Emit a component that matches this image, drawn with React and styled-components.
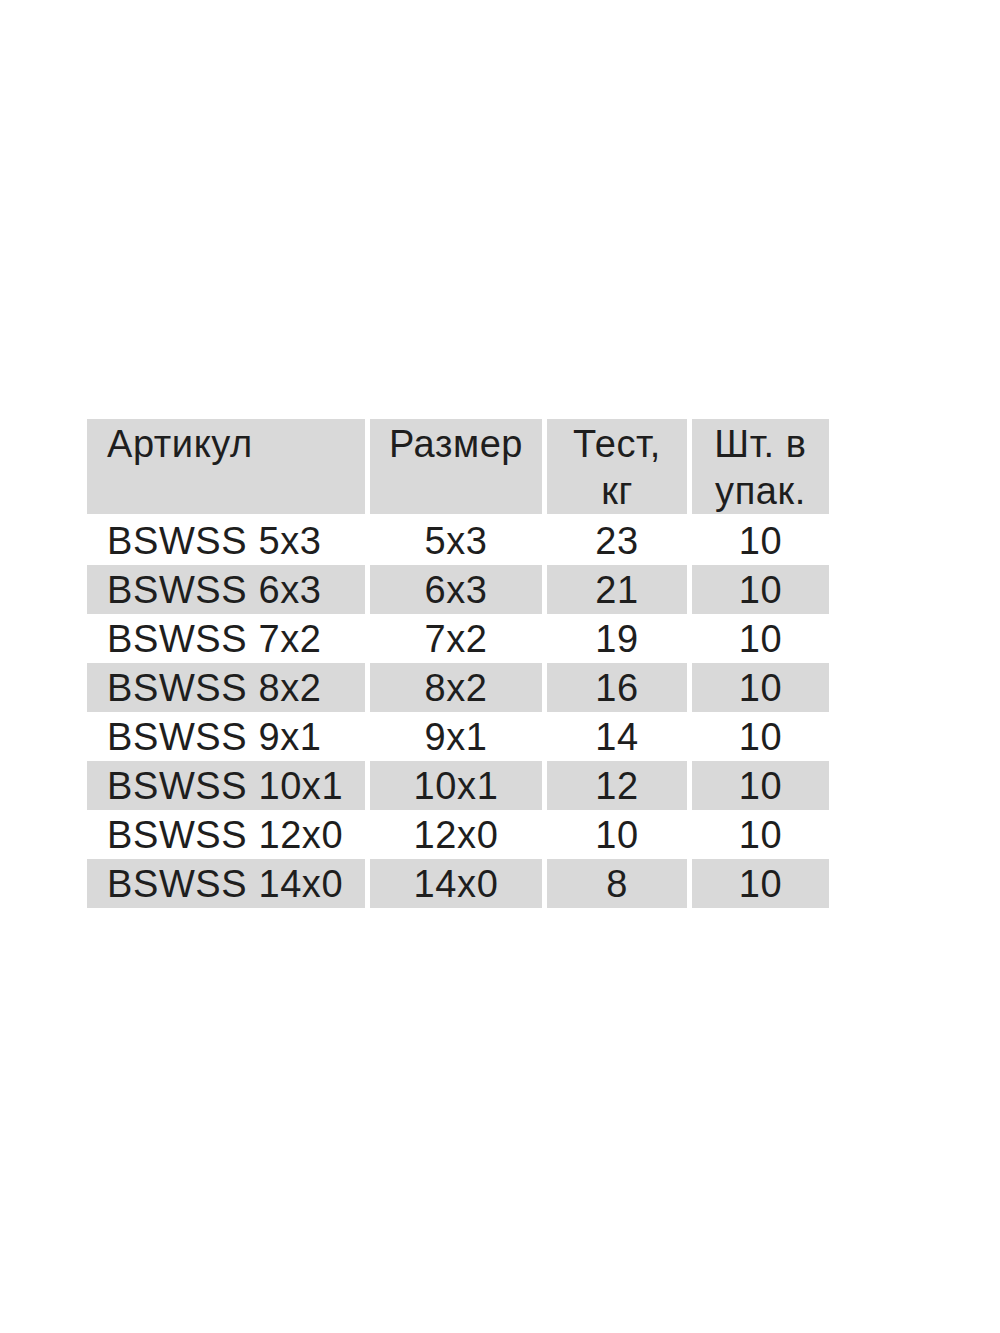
import React from 'react'
import styled, { createGlobalStyle } from 'styled-components'

const GlobalStyle = createGlobalStyle`
  body {
    margin: 0;
    background: #ffffff;
    font-family: "Liberation Sans", Arial, sans-serif;
  }
`

const Page = styled.div`
  width: 1000px;
  height: 1333px;
  box-sizing: border-box;
  padding: 419px 0 0 87px;
  background: #ffffff;
`

const Table = styled.div`
  display: grid;
  grid-template-columns: 278px 172px 140px 137px;
  column-gap: 5px;
  row-gap: 0;
  width: max-content;
  color: #1e1e1e;
  font-size: 38px;
  letter-spacing: 0.6px;
`

const HeadCell = styled.div`
  height: 95px;
  margin-bottom: 2px;
  box-sizing: border-box;
  padding-top: 2px;
  background: #d9d9d9;
  line-height: 47px;
  text-align: ${(p) => (p.$left ? 'left' : 'center')};
  padding-left: ${(p) => (p.$left ? '20px' : '0')};
`

const Cell = styled.div`
  height: 49px;
  line-height: 51px;
  overflow: hidden;
  background: ${(p) => (p.$shaded ? '#d9d9d9' : '#ffffff')};
  text-align: ${(p) => (p.$left ? 'left' : 'center')};
  padding-left: ${(p) => (p.$left ? '20px' : '0')};
  white-space: nowrap;
`

const rows = [
  ['BSWSS 5x3', '5x3', '23', '10'],
  ['BSWSS 6x3', '6x3', '21', '10'],
  ['BSWSS 7x2', '7x2', '19', '10'],
  ['BSWSS 8x2', '8x2', '16', '10'],
  ['BSWSS 9x1', '9x1', '14', '10'],
  ['BSWSS 10x1', '10x1', '12', '10'],
  ['BSWSS 12x0', '12x0', '10', '10'],
  ['BSWSS 14x0', '14x0', '8', '10'],
]

export default function App() {
  return (
    <Page>
      <GlobalStyle />
      <Table>
        <HeadCell $left>Артикул</HeadCell>
        <HeadCell>Размер</HeadCell>
        <HeadCell>
          Тест,
          <br />
          кг
        </HeadCell>
        <HeadCell>
          Шт. в
          <br />
          упак.
        </HeadCell>
        {rows.map((row, i) =>
          row.map((value, j) => (
            <Cell key={`${i}-${j}`} $left={j === 0} $shaded={i % 2 === 1}>
              {value}
            </Cell>
          ))
        )}
      </Table>
    </Page>
  )
}
